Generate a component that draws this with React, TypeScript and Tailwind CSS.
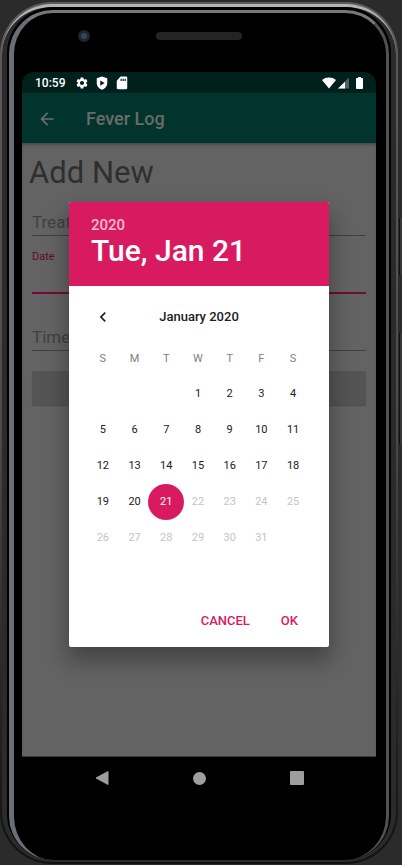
import type { ReactNode } from 'react';

const weekdays = ['S', 'M', 'T', 'W', 'T', 'F', 'S'];
const weekdayNames = ['Sunday', 'Monday', 'Tuesday', 'Wednesday', 'Thursday', 'Friday', 'Saturday'];
const today = 21;

// January 2020 starts on a Wednesday.
const weeks: (number | null)[][] = Array.from({ length: 5 }, (_, w) =>
  Array.from({ length: 7 }, (_, d) => {
    const n = w * 7 + d - 2;
    return n >= 1 && n <= 31 ? n : null;
  }),
);

function StatusBar() {
  return (
    <div className="flex h-[21px] shrink-0 items-center bg-[#00201b] px-[13px] text-white">
      <span className="text-[12px] leading-4 font-medium">10:59</span>
      <svg className="ml-[10px] h-[14px] w-[14px]" viewBox="0 0 24 24" fill="currentColor" aria-hidden="true">
        <path d="M19.14 12.94c.04-.3.06-.61.06-.94 0-.32-.02-.64-.07-.94l2.03-1.58a.49.49 0 0 0 .12-.61l-1.92-3.32a.49.49 0 0 0-.59-.22l-2.39.96a7.03 7.03 0 0 0-1.62-.94l-.36-2.54a.48.48 0 0 0-.48-.41h-3.84a.47.47 0 0 0-.47.41l-.36 2.54c-.59.24-1.13.57-1.62.94l-2.39-.96a.48.48 0 0 0-.59.22L2.74 8.87a.48.48 0 0 0 .12.61l2.03 1.58c-.05.3-.09.63-.09.94s.02.64.07.94l-2.03 1.58a.49.49 0 0 0-.12.61l1.92 3.32c.12.22.37.29.59.22l2.39-.96c.5.38 1.03.7 1.62.94l.36 2.54c.05.24.24.41.48.41h3.84c.24 0 .44-.17.47-.41l.36-2.54a6.8 6.8 0 0 0 1.62-.94l2.39.96c.22.08.47 0 .59-.22l1.92-3.32a.48.48 0 0 0-.12-.61l-2.01-1.58zM12 15.6a3.6 3.6 0 1 1 0-7.2 3.6 3.6 0 0 1 0 7.2z" />
      </svg>
      <svg className="ml-[6px] h-[14px] w-[14px]" viewBox="0 0 24 24" fill="currentColor" aria-hidden="true">
        <path
          fillRule="evenodd"
          d="M12 1 3 4v9c0 5 3.800 9 9 10.500 5.200-1.500 9-5.500 9-10.500V4l-9-3zM9 7.500l7.500 4.500L9 16.500z"
        />
      </svg>
      <svg className="ml-[6px] h-[14px] w-[14px]" viewBox="0 0 24 24" fill="currentColor" aria-hidden="true">
        <path
          fillRule="evenodd"
          d="M19 1H9.500L3 8v12.500c0 1.200.9 2 2 2h14c1.100 0 2-.9 2-2V3c0-1.100-.9-2-2-2zM9.500 4.500v4h2v-4zm3.500 0v4h2v-4zm3.500 0v4h2v-4z"
        />
      </svg>
      <span className="flex-1" />
      <svg className="h-[12px] w-[14px]" viewBox="0 0 14 12" fill="currentColor" aria-hidden="true">
        <path d="M7 11.500 0 3C2 1.300 4.300.5 7 .5s5 .8 7 2.500z" />
      </svg>
      <svg className="ml-[2px] h-[12px] w-[11px]" viewBox="0 0 11 12" fill="currentColor" aria-hidden="true">
        <path d="M11 .5v11H0z" opacity=".3" />
        <path d="M7 4.700v6.800H0z" />
      </svg>
      <svg className="ml-[7px] h-[12px] w-[7px]" viewBox="0 0 7 12" fill="currentColor" aria-hidden="true">
        <path d="M2 0h3v1h1.200c.5 0 .8.300.8.800v9.400c0 .5-.3.800-.8.800H.8c-.5 0-.8-.3-.8-.8V1.800C0 1.300.3 1 .8 1H2z" />
      </svg>
    </div>
  );
}

function AppBar() {
  return (
    <header className="flex h-[50px] shrink-0 items-center gap-[29px] bg-[#00342c] pt-[2px] pl-[15px] text-[#6b6b6b]">
      <button type="button" aria-label="Back" className="h-5 w-5">
        <svg className="h-5 w-5" viewBox="0 0 24 24" fill="currentColor" aria-hidden="true">
          <path d="M20 11H7.830l5.590-5.590L12 4l-8 8 8 8 1.410-1.410L7.830 13H20v-2z" />
        </svg>
      </button>
      <h1 className="text-[18px] leading-6 font-medium">Fever Log</h1>
    </header>
  );
}

function EntryForm() {
  return (
    <form className="flex flex-1 flex-col bg-[#636363] px-[10px] shadow-[inset_0_3px_3px_-1px_#4a4a4a]">
      <h2 className="-ml-[3px] pt-[10px] text-[31px] leading-10 text-[#2f2f2f]">Add New</h2>
      <input
        aria-label="Treatment"
        placeholder="Treatment"
        className="mt-[16px] h-[27px] border-b border-[#404040] text-[17px] outline-none placeholder:text-[#404040]"
      />
      <label htmlFor="date" className="mt-[13px] text-[11px] leading-4 text-[#5f0b2b]">
        Date
      </label>
      <input id="date" className="h-[29px] border-b-2 border-[#6f0d33] outline-none" />
      <input
        aria-label="Time"
        placeholder="Time"
        className="mt-[30px] h-[27px] border-b border-[#404040] text-[17px] outline-none placeholder:text-[#404040]"
      />
      <button type="button" aria-label="Save" className="mt-[20px] h-[34px] rounded-[2px] bg-[#545454] shadow-[0_1px_1px_#4c4c4c]" />
    </form>
  );
}

function DayCell({ day }: { day: number | null }) {
  if (day === null) return <td />;
  let tone = 'text-[#212121]';
  if (day === today) tone = 'rounded-full bg-[#d81b60] text-white';
  if (day > today) tone = 'text-[#c4c4c4]';
  return (
    <td className="h-9 p-0">
      <div className="flex justify-center">
        <button type="button" disabled={day > today} className={'h-9 w-9 shrink-0 text-[11px] ' + tone}>
          {day}
        </button>
      </div>
    </td>
  );
}

function DialogAction({ children }: { children: ReactNode }) {
  return (
    <button type="button" className="text-[13px] leading-5 font-medium text-[#d81b60]">
      {children}
    </button>
  );
}

function DatePicker() {
  return (
    <div
      role="dialog"
      aria-label="Choose a date"
      className="w-[260px] overflow-hidden rounded-[2px] bg-white shadow-[0_12px_22px_2px_rgba(0,0,0,0.32)]"
    >
      <div className="h-[84px] bg-[#d81b60] px-[22px] pt-[13px] text-white">
        <div className="text-[15px] leading-5 font-medium text-[#f3bbcf]">2020</div>
        <div className="text-[30px] leading-8 font-medium">Tue, Jan 21</div>
      </div>
      <div className="px-[18px] pt-[21px]">
        <div className="grid grid-cols-[32px_1fr_32px] items-center">
          <button type="button" aria-label="Previous month" className="flex justify-center text-[#212121]">
            <svg className="h-5 w-5" viewBox="0 0 24 24" fill="currentColor" aria-hidden="true">
              <path d="M15.410 7.410 14 6l-6 6 6 6 1.410-1.410L10.830 12z" />
            </svg>
          </button>
          <div className="text-center text-[13px] leading-5 font-medium text-[#212121]">January 2020</div>
        </div>
        <div className="pt-[13px] pr-[2px]">
          <table className="w-full table-fixed border-collapse text-center">
            <thead>
              <tr className="h-9">
                {weekdays.map((d, i) => (
                  <th key={i} abbr={weekdayNames[i]} className="p-0 pt-[3px] text-[11px] font-normal text-[#808080]">
                    {d}
                  </th>
                ))}
              </tr>
            </thead>
            <tbody>
              {weeks.map((week, i) => (
                <tr key={i}>
                  {week.map((day, j) => (
                    <DayCell key={j} day={day} />
                  ))}
                </tr>
              ))}
            </tbody>
          </table>
        </div>
      </div>
      <div className="flex justify-end gap-[31px] pt-[55px] pr-[31px] pb-[16px]">
        <DialogAction>CANCEL</DialogAction>
        <DialogAction>OK</DialogAction>
      </div>
    </div>
  );
}

function NavBar() {
  return (
    <nav className="flex h-[42px] items-center justify-around px-[30px] text-[#9e9e9e]">
      <button type="button" aria-label="Back">
        <svg className="h-4 w-4" viewBox="0 0 16 16" fill="currentColor" aria-hidden="true">
          <path d="M14 1.500v13L2 8z" stroke="currentColor" strokeLinejoin="round" />
        </svg>
      </button>
      <button type="button" aria-label="Home" className="h-[13px] w-[13px] rounded-full bg-[#9e9e9e]" />
      <button type="button" aria-label="Overview" className="h-[14px] w-[14px] rounded-[1px] bg-[#9e9e9e]" />
    </nav>
  );
}

export default function App() {
  return (
    <div className="relative flex min-h-screen bg-[#2b2b2b] pt-[2px] pr-[4px] pb-px font-['Roboto','Noto_Sans',sans-serif]">
      <span className="absolute top-[218px] right-0 h-[57px] w-[3px] border-l border-[#111111] bg-[#363636]" />
      <span className="absolute top-[333px] right-0 h-[111px] w-[3px] border-l border-[#111111] bg-[#363636]" />
      <div className="flex flex-1 rounded-[52px] bg-linear-to-b from-[#5c5c5c] via-[#4a4a4a] to-[#111111] p-[2px]">
        <div className="flex flex-1 rounded-[50px] border-t-[3px] border-t-[#b4b4b4] bg-[#2b2b2b] px-[5px] pb-[2px]">
          <div className="flex flex-1 rounded-[46px] bg-black px-[2px] pt-[3px]">
            <div className="flex flex-1 flex-col rounded-[44px] border-t-[3px] border-r-[3px] border-l-[5px] border-t-[#77787c] border-r-[#505155] border-l-[#6a6e75] bg-black pr-[10px] pl-[8px]">
              <div className="flex h-[59px] shrink-0 justify-center pt-[19px]">
                <div className="relative h-[8px] w-[86px] rounded-full bg-[#242424]">
                  <span className="absolute top-[-2px] left-[-78px] h-[12px] w-[12px] rounded-full border-[3px] border-[#242424] bg-[#31436e]" />
                </div>
              </div>
              <main className="relative flex flex-1 flex-col overflow-hidden rounded-t-[12px] border-b border-[#3a3a3a]">
                <StatusBar />
                <AppBar />
                <EntryForm />
                <div className="absolute inset-x-0 top-[21px] bottom-0 flex items-center justify-center">
                  <DatePicker />
                </div>
              </main>
              <div className="h-[103px] shrink-0">
                <NavBar />
              </div>
            </div>
          </div>
        </div>
      </div>
    </div>
  );
}
